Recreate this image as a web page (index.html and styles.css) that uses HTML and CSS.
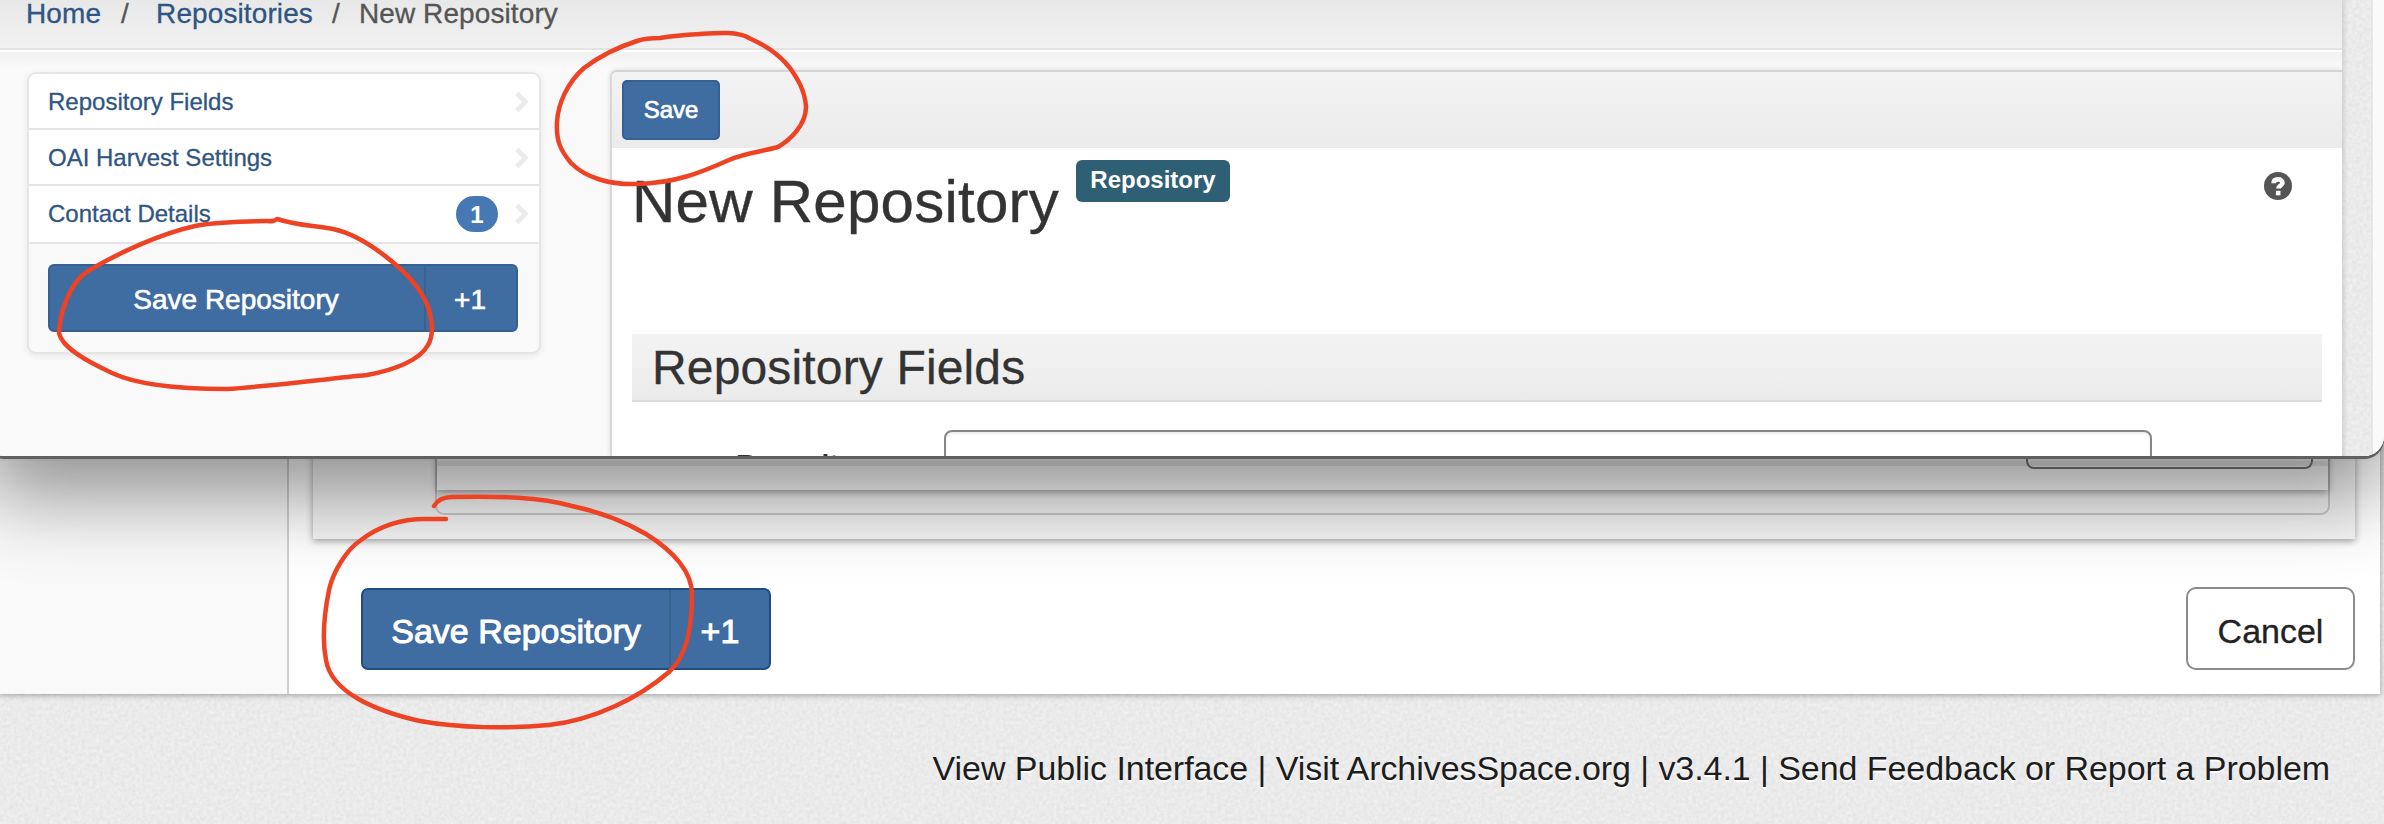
FILE: index.html
```html
<!DOCTYPE html>
<html lang="en">
<head>
<meta charset="utf-8">
<title>New Repository</title>
<link rel="stylesheet" href="styles.css">
</head>
<body>
<div class="page">
  <svg class="grain" width="2384" height="824" aria-hidden="true">
    <filter id="grain" x="0" y="0" width="100%" height="100%" color-interpolation-filters="sRGB">
      <feTurbulence type="fractalNoise" baseFrequency="0.28" numOctaves="2" seed="4"/>
      <feColorMatrix type="matrix" values="0.075 0 0 0 0.882  0.075 0 0 0 0.882  0.075 0 0 0 0.882  0 0 0 0 1"/>
    </filter>
    <rect width="2384" height="824" filter="url(#grain)"/>
  </svg>
  <div class="page-body">
    <div class="page-side"></div>
    <main class="page-main">
      <div class="outer-box">
        <div class="nested-box">
          <div class="nested-item"><div class="item-line"></div><div class="item-select"></div></div>
        </div>
      </div>
      <div class="form-actions">
        <div class="btn-group big"><button class="btn-save">Save Repository</button><button class="btn-plus">+1</button></div>
        <button class="btn-cancel">Cancel</button>
      </div>
    </main>
  </div>
  <footer class="footer"><span class="footer-text">View Public Interface | Visit ArchivesSpace.org | v3.4.1 | Send Feedback or Report a Problem</span></footer>
</div>

<div class="window">
  <div class="window-inner">
    <div class="window-content">
      <nav class="crumbs"><a>Home</a><span class="sep">/</span><a>Repositories</a><span class="sep sep2">/</span><span>New Repository</span></nav>
      <div class="columns">
        <aside class="sidebar">
          <div class="side-row"><span>Repository Fields</span><svg class="chev" viewBox="0 0 14 22"><path d="M2 2.5 L10.5 11 L2 19.5"/></svg></div>
          <div class="side-row"><span>OAI Harvest Settings</span><svg class="chev" viewBox="0 0 14 22"><path d="M2 2.5 L10.5 11 L2 19.5"/></svg></div>
          <div class="side-row last"><span>Contact Details</span><b class="count">1</b><svg class="chev" viewBox="0 0 14 22"><path d="M2 2.5 L10.5 11 L2 19.5"/></svg></div>
          <div class="side-actions"><div class="btn-group"><button class="btn-save">Save Repository</button><button class="btn-plus">+1</button></div></div>
        </aside>
        <section class="record">
          <div class="toolbar"><button class="btn-small">Save</button></div>
          <div class="record-head">
            <h1>New Repository</h1><span class="label">Repository</span>
            <svg class="help" viewBox="0 0 28 28"><circle cx="14" cy="14" r="14"/><path d="M9.6 11.2C9.6 8.5 11.5 7.4 14 7.4s4.5 1.2 4.5 3.4c0 2.9-4.1 2.9-4.1 5.8" /><rect x="11.9" y="18.8" width="4.6" height="4.5"/></svg>
          </div>
          <h2>Repository Fields</h2>
          <div class="field"><span class="field-label">Repository</span><div class="input"></div></div>
        </section>
      </div>
    </div>
    <div class="gutter"><svg width="31" height="456" aria-hidden="true"><rect width="31" height="456" filter="url(#grain)"/></svg></div>
    <div class="scrollbar"></div>
  </div>
</div>

<svg class="marks" width="2384" height="824" viewBox="0 0 2384 824" aria-hidden="true">
  <path d="M277 219 C274 222 270 221 262 221 C235 222 213 222 195 226 C160 234 120 252 88 271 C70 282 60 312 59 333 C62 348 88 362 112 373 C142 387 190 389 226 389 C275 386 325 379 367 375 C395 370 420 360 428 345 C434 335 434 313 421 293 C409 273 367 236 333 229 C312 225 300 226 277 219 Z"/>
  <path d="M660 38 C650 38 643 39 637 41 C615 48 600 56 584 68 C567 83 558 104 557 122 C556 140 560 150 571 163 C586 178 610 185 637 184 C675 183 700 173 729 160 C745 153 765 151 778 147 C790 140 806 125 806 107 C805 90 797 78 790 68 C777 52 764 45 749 38 C738 31 715 33 700 34 C683 35 672 36 660 38 Z"/>
  <path d="M434 506 C438 499 444 497 452 497 C500 496 540 497 572 506 C600 512 622 520 646 534 C675 552 692 573 692 594 C692 625 688 655 669 672 C640 697 595 720 549 725 C510 729 458 728 420 721 C375 711 331 692 326 660 C322 640 324 615 329 590 C333 572 346 550 361 540 C382 524 405 519 425 519 L446 519"/>
</svg>
</body>
</html>
```
FILE: styles.css
```css
* { box-sizing: border-box; }
body { margin: 0; width: 2384px; height: 824px; overflow: hidden; position: relative; font-family: "Liberation Sans", Arial, sans-serif; background: #eaeaea; }
button { font-family: inherit; margin: 0; padding: 0; border: 0; background: none; }
h1, h2 { margin: 0; font-weight: 400; color: #333; }

.page { position: relative; height: 824px; display: flex; flex-direction: column; }
.grain { position: absolute; left: 0; top: 0; }
.page-body { position: relative; height: 694px; width: 2380px; display: flex; background: #fff; box-shadow: 0 1px 6px rgba(0,0,0,.35); }
.page-side { width: 289px; background: #f9f9f9; border-right: 2px solid #cfcfcf; }
.page-main { flex: 1; display: flex; flex-direction: column; padding: 0 25px 24px 24px; }
.outer-box { height: 539px; background: #f6f6f6; box-shadow: 0 2px 7px rgba(0,0,0,.38); padding: 0 25px 0 122px; }
.nested-box { height: 515px; border: 2px solid #ccc; border-radius: 0 0 9px 9px; }
.nested-item { height: 488px; background: #fbfbfb; box-shadow: 0 2px 7px rgba(0,0,0,.38); padding-top: 459px; }
.item-line { height: 5px; background: #e8e8e8; }
.item-select { height: 11px; margin: -8px 15px 0 auto; width: 287px; border: 2px solid #777; border-top: 0; border-radius: 0 0 8px 8px; position: relative; }
.form-actions { margin-top: 48px; display: flex; justify-content: space-between; align-items: flex-start; padding-left: 48px; }

.btn-group { display: flex; height: 68px; border: 2px solid #365f92; border-radius: 6px; background: #3f6ca1; color: #fff; }
.btn-group button { color: #fff; font-size: 28px; padding: 3px 2px 0 0; -webkit-text-stroke: .6px #fff; }
.btn-group .btn-save { flex: 1; border-right: 2px solid #38628f; }
.btn-group .btn-plus { width: 90px; }
.btn-group.big { height: 82px; width: 410px; margin-top: 1px; border-color: #1f4c82; border-radius: 7px; }
.btn-group.big button { font-size: 34px; padding: 4px 0 0; -webkit-text-stroke: 1px #fff; }
.btn-group.big .btn-plus { width: 98px; }
.btn-cancel { width: 169px; height: 83px; border: 2px solid #8b8b8b; border-radius: 10px; background: #fff; color: #222; font-size: 34px; padding-top: 5px; -webkit-text-stroke: .3px #222; }

.footer { position: relative; height: 130px; display: flex; justify-content: flex-end; padding: 54px 54px 0 0; }
.footer-text { font-size: 34px; line-height: 40px; letter-spacing: -.06px; color: #1d1d1d; white-space: nowrap; text-shadow: 0 2px 1px #fff; }

.window { position: absolute; left: -16px; top: -300px; width: 2400px; height: 756px; border-radius: 0 0 20px 20px; box-shadow: 0 3px 0 #606060, 0 0 5px rgba(0,0,0,.3), 0 40px 80px rgba(0,0,0,.42); }
.window-inner { height: 756px; padding: 300px 0 0 16px; border-radius: 0 0 20px 20px; overflow: hidden; display: flex; background: #f9f9f9; }
.window-content { width: 2342px; height: 456px; }
.gutter { width: 31px; position: relative; border-right: 2px solid #e6e6e6; overflow: hidden; }
.gutter svg { display: block; }
.gutter::after { content: ""; position: absolute; inset: 0; background: linear-gradient(90deg, rgba(0,0,0,.1), transparent 6px); }
.scrollbar { flex: 1; background: #fafafa; }

.crumbs { height: 50px; line-height: 28px; font-size: 28px; letter-spacing: .1px; color: #555; background: linear-gradient(#e8e8e8, #f1f1f1); border-bottom: 2px solid #e3e3e3; padding: 0 0 0 26px; display: flex; -webkit-text-stroke: .3px; }
.crumbs a { color: #2f5582; }
.sep { width: 55px; padding-left: 20px; }
.sep2 { width: 46px; padding-left: 19px; }
.columns { height: 406px; border-top: 2px solid #fff; background: linear-gradient(#f1f1f1, #f9f9f9 16px); display: flex; padding-left: 27px; }

.sidebar { width: 514px; height: 282px; margin-top: 20px; border: 2px solid #e5e5e5; border-radius: 9px; box-shadow: 0 2px 6px rgba(0,0,0,.07); background: #f9f9f9; overflow: hidden; }
.side-row { height: 56px; padding: 1px 10px 0 19px; border-bottom: 2px solid #e5e5e5; background: #fff; display: flex; align-items: center; color: #2f5582; font-size: 24px; -webkit-text-stroke: .3px #2f5582; }
.side-row.last { height: 58px; padding-top: 0; padding-bottom: 1px; }
.side-row span { flex: 1; }
.chev { width: 14px; height: 22px; fill: none; stroke: #ebebeb; stroke-width: 4.6; }
.count { width: 42px; height: 36px; border-radius: 18px; background: #4679b3; color: #fff; text-align: center; line-height: 37px; margin-right: 17px; -webkit-text-stroke: 0; }
.side-actions { padding: 20px 21px 0 19px; }

.record { width: 1732px; margin: 18px 0 0 69px; height: 386px; border-left: 2px solid #d8d8d8; border-top: 2px solid #d4d4d4; border-top-left-radius: 7px; background: #fff; box-shadow: 0 0 5px rgba(0,0,0,.13); overflow: hidden; }
.toolbar { height: 76px; background: linear-gradient(#f3f3f3, #ebebeb); padding: 8px 0 0 10px; }
.btn-small { display: block; width: 98px; height: 60px; border: 2px solid #365f92; border-radius: 5px; background: #3f6ca1; color: #fff; font-size: 24px; -webkit-text-stroke: .7px #fff; }
.record-head { height: 186px; padding: 12px 50px 0 20px; display: flex; align-items: flex-start; }
h1 { font-size: 60px; line-height: 83px; width: 444px; letter-spacing: .25px; white-space: nowrap; -webkit-text-stroke: .4px #333; }
.label { width: 154px; height: 42px; line-height: 40px; border-radius: 6px; background: #2f5f74; color: #fff; font-size: 24px; font-weight: 700; text-align: center; }
.help { width: 28px; height: 28px; margin: 12px 0 0 auto; fill: #555; }
.help path { fill: none; stroke: #fff; stroke-width: 4.6; }
.help rect { fill: #fff; }
h2 { margin: 0 20px; height: 68px; line-height: 68px; font-size: 48px; padding-left: 20px; letter-spacing: .15px; background: linear-gradient(#f3f3f3, #ebebeb); border-bottom: 2px solid #dcdcdc; -webkit-text-stroke: .3px #333; }
.field { display: flex; padding: 28px 0 0 124px; }
.field-label { width: 208px; font-size: 28px; font-weight: 700; line-height: 32px; padding-top: 19px; color: #333; }
.input { width: 1208px; height: 68px; border: 2px solid #868686; border-radius: 8px; box-shadow: inset 0 2px 3px rgba(0,0,0,.08); }

.marks { position: absolute; left: 0; top: 0; fill: none; stroke: #ee4225; stroke-width: 4.5; stroke-linecap: round; stroke-linejoin: round; }
```
